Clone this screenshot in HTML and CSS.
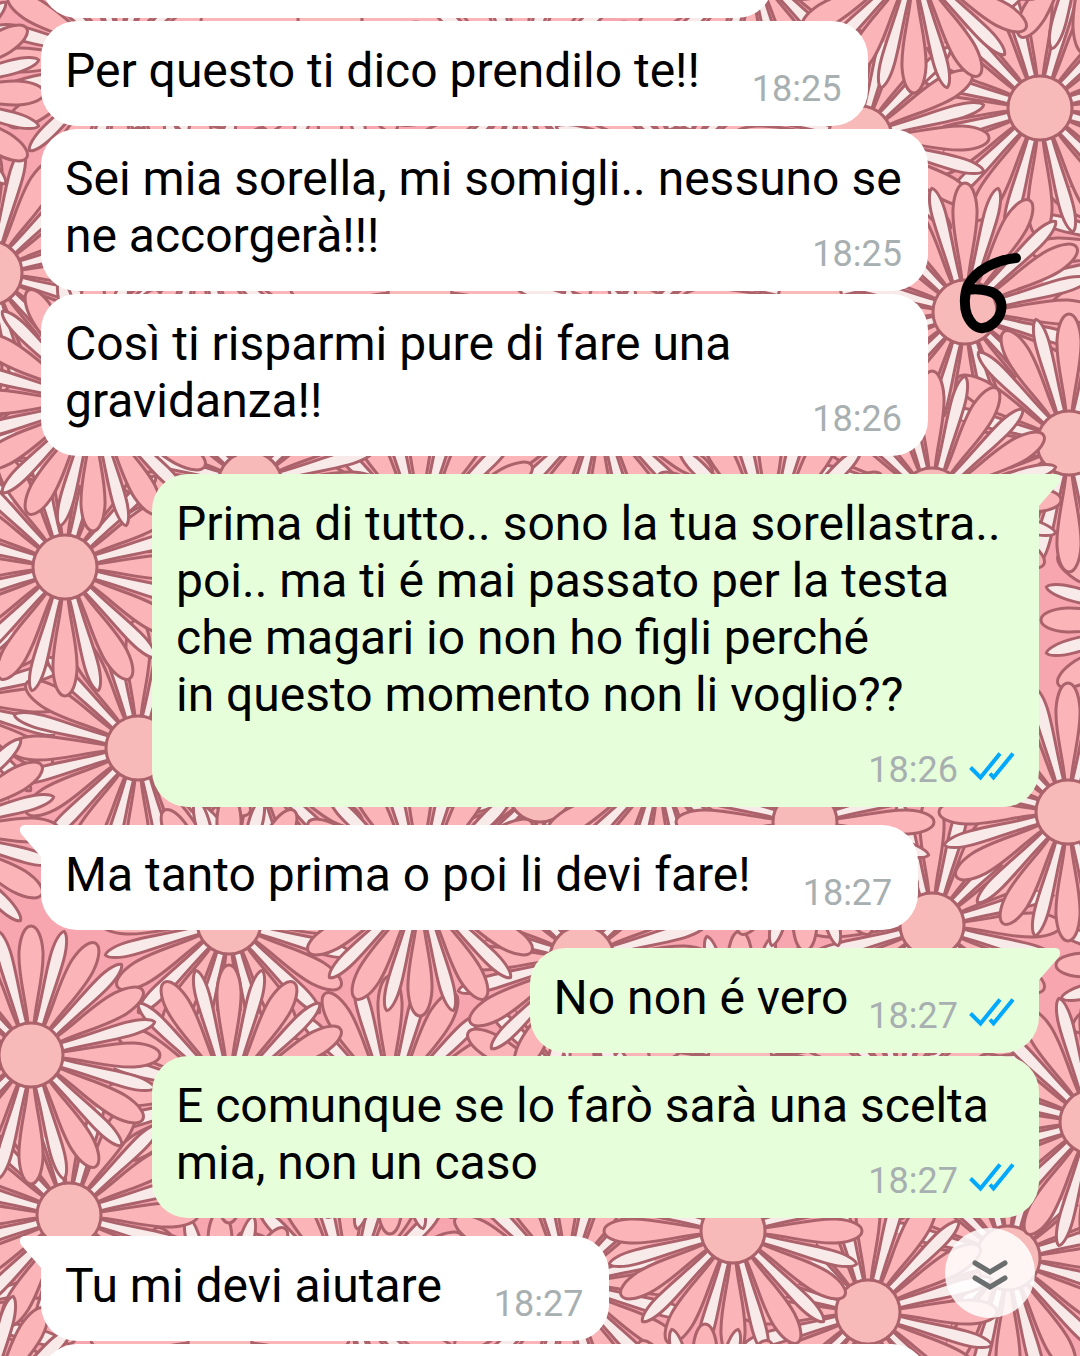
FILE: index.html
```html
<!DOCTYPE html>
<html lang="it">
<head>
<meta charset="utf-8">
<meta name="viewport" content="width=device-width, initial-scale=1">
<title>Chat</title>
<link rel="stylesheet" href="styles.css">
</head>
<body>
<svg class="wallpaper" viewBox="0 0 1080 1356" preserveAspectRatio="xMidYMin slice" aria-hidden="true">
  <defs>
    <path id="p" class="petal" d="M-3 -31C-5 -55 -13 -80 -12 -103C-11 -119 -6 -129 0 -129C6 -129 11 -119 12 -103C13 -80 5 -55 3 -31Z"/>
    <path id="w" class="petal-light" d="M-4 -31C-4 -55 -7 -80 -7 -100C-7 -115 -4 -126 0 -128C4 -126 7 -115 7 -100C7 -80 4 -55 4 -31Z"/>
    <g id="daisy">
      <circle class="bed" r="84"/>
      <use href="#w" transform="rotate(15)"/><use href="#w" transform="rotate(45)"/><use href="#w" transform="rotate(75)"/>
      <use href="#w" transform="rotate(105)"/><use href="#w" transform="rotate(135)"/><use href="#w" transform="rotate(165)"/>
      <use href="#w" transform="rotate(195)"/><use href="#w" transform="rotate(225)"/><use href="#w" transform="rotate(255)"/>
      <use href="#w" transform="rotate(285)"/><use href="#w" transform="rotate(315)"/><use href="#w" transform="rotate(345)"/>
      <use href="#p"/><use href="#p" transform="rotate(30)"/><use href="#p" transform="rotate(60)"/>
      <use href="#p" transform="rotate(90)"/><use href="#p" transform="rotate(120)"/><use href="#p" transform="rotate(150)"/>
      <use href="#p" transform="rotate(180)"/><use href="#p" transform="rotate(210)"/><use href="#p" transform="rotate(240)"/>
      <use href="#p" transform="rotate(270)"/><use href="#p" transform="rotate(300)"/><use href="#p" transform="rotate(330)"/>
      <circle class="heart" r="32"/>
    </g>
  </defs>
  <rect class="ground" width="1080" height="1356"/>
  <use href="#daisy" x="120" y="60"/>
  <use href="#daisy" x="330" y="20"/>
  <use href="#daisy" x="520" y="90"/>
  <use href="#daisy" x="680" y="160"/>
  <use href="#daisy" x="200" y="240"/>
  <use href="#daisy" x="420" y="290"/>
  <use href="#daisy" x="640" y="320"/>
  <use href="#daisy" x="810" y="300"/>
  <use href="#daisy" x="1160" y="250"/>
  <use href="#daisy" x="1170" y="620"/>
  <use href="#daisy" x="-60" y="700"/>
  <use href="#daisy" x="-40" y="450"/>
  <use href="#daisy" x="-110" y="1180"/>
  <use href="#daisy" x="-60" y="1310"/>
  <use href="#daisy" x="250" y="760"/>
  <use href="#daisy" x="540" y="790"/>
  <use href="#daisy" x="740" y="1060"/>
  <use href="#daisy" x="900" y="1090"/>
  <use href="#daisy" x="350" y="1300"/>
  <use href="#daisy" x="220" y="1340"/>
  <use href="#daisy" x="1040" y="108"/>
  <use href="#daisy" x="860" y="138"/>
  <use href="#daisy" x="751" y="-36"/>
  <use href="#daisy" x="1085" y="-75"/>
  <use href="#daisy" x="914" y="-36"/>
  <use href="#daisy" x="965" y="312"/>
  <use href="#daisy" x="1069" y="443"/>
  <use href="#daisy" x="932" y="500"/>
  <use href="#daisy" x="-10" y="273"/>
  <use href="#daisy" x="-85" y="93"/>
  <use href="#daisy" x="600" y="410"/>
  <use href="#daisy" x="770" y="540"/>
  <use href="#daisy" x="420" y="530"/>
  <use href="#daisy" x="250" y="484"/>
  <use href="#daisy" x="138" y="748"/>
  <use href="#daisy" x="65" y="567"/>
  <use href="#daisy" x="93" y="402"/>
  <use href="#daisy" x="-70" y="830"/>
  <use href="#daisy" x="229" y="922"/>
  <use href="#daisy" x="390" y="1105"/>
  <use href="#daisy" x="580" y="1097"/>
  <use href="#daisy" x="582" y="958"/>
  <use href="#daisy" x="659" y="770"/>
  <use href="#daisy" x="420" y="887"/>
  <use href="#daisy" x="229" y="1094"/>
  <use href="#daisy" x="932" y="925"/>
  <use href="#daisy" x="805" y="822"/>
  <use href="#daisy" x="1185" y="965"/>
  <use href="#daisy" x="1068" y="812"/>
  <use href="#daisy" x="1008" y="1258"/>
  <use href="#daisy" x="1092" y="1122"/>
  <use href="#daisy" x="69" y="1215"/>
  <use href="#daisy" x="31" y="1055"/>
  <use href="#daisy" x="-20" y="1420"/>
  <use href="#daisy" x="868" y="1312"/>
  <use href="#daisy" x="567" y="1283"/>
  <use href="#daisy" x="733" y="1231"/>
  <use href="#daisy" x="705" y="1453"/>
</svg>

<svg class="symbols" aria-hidden="true">
  <symbol id="read" viewBox="0 0 46 30">
    <path d="M1.500 16.500L11.500 26.500L31 2.500M21 22.500L24.500 26.500L44 2.500"/>
  </symbol>
</svg>

<main class="chat">
  <div class="bubble in stub-top"></div>
  <article class="bubble in">Per questo ti dico prendilo te!!<span class="meta"><time>18:25</time></span></article>
  <article class="bubble in">Sei mia sorella, mi somigli.. nessuno se ne accorgerà!!!<span class="meta"><time>18:25</time></span></article>
  <article class="bubble in">Così ti risparmi pure di fare una gravidanza!!<span class="meta"><time>18:26</time></span></article>
  <article class="bubble out first">Prima di tutto.. sono la tua sorellastra.. poi.. ma ti é mai passato per la testa che magari io non ho figli perché<br>in questo momento non li voglio??<span class="meta"><time>18:26</time><svg class="read" role="img" aria-label="Letto"><use href="#read"/></svg></span></article>
  <article class="bubble in first">Ma tanto prima o poi li devi fare!<span class="meta"><time>18:27</time></span></article>
  <article class="bubble out first">No non é vero<span class="meta"><time>18:27</time><svg class="read" role="img" aria-label="Letto"><use href="#read"/></svg></span></article>
  <article class="bubble out">E comunque se lo farò sarà una scelta mia, non un caso<span class="meta"><time>18:27</time><svg class="read" role="img" aria-label="Letto"><use href="#read"/></svg></span></article>
  <article class="bubble in first">Tu mi devi aiutare<span class="meta"><time>18:27</time></span></article>
  <div class="bubble in stub-bottom"></div>
</main>

<svg class="scribble" viewBox="0 0 64 84" role="img" aria-label="6">
  <path d="M58 7C38 9 18 19 10 34C6 43 6 56 9 64C13 73 19 78 25 77C33 76 41 69 43 60C45 50 40 42 30 40C23 38 15 38 9 39"/>
</svg>

<button class="jump" type="button" aria-label="Vai in fondo">
  <svg viewBox="0 0 38 34" aria-hidden="true"><path d="M4 5L19 14L34 5M4 20L19 29L34 20"/></svg>
</button>
</body>
</html>
```
FILE: styles.css
```css
* {
  box-sizing: border-box;
}

body {
  position: relative;
  height: 100vh;
  margin: 0;
  overflow: hidden;
  background: #f9aab2;
  color: #000;
  font-family: Roboto, "Noto Sans", sans-serif;
  font-size: 48px;
  line-height: 57px;
}

/* wallpaper */
.wallpaper {
  position: absolute;
  inset: 0;
  z-index: -1;
  width: 100%;
  height: 100%;
}

.ground,
.bed {
  fill: #f7a6b0;
}

.petal,
.petal-light,
.heart {
  stroke: #ab626b;
  stroke-width: 3;
}

.petal {
  fill: #fbb5b8;
}

.petal-light {
  fill: #f9eaea;
}

.heart {
  fill: #f8bab8;
}

.symbols {
  display: none;
}

/* messages */
.chat {
  display: flex;
  flex-direction: column;
  gap: 3px;
  height: 100%;
  padding: 0 41px;
  overflow: hidden;
}

.bubble {
  position: relative;
  display: flow-root;
  flex: none;
  max-width: calc(100% - 111px);
  padding: 21px 24px 27px;
  border-radius: 36px;
}

.in {
  align-self: flex-start;
  background: #fff;
}

.out {
  align-self: flex-end;
  background: #e6ffda;
}

.first {
  margin-top: 15px;
}

.in.first {
  border-top-left-radius: 0;
}

.out.first {
  border-top-right-radius: 0;
}

/* the corner that points at the speaker */
.first::before {
  content: "";
  position: absolute;
  top: 0;
  width: 22px;
  height: 33px;
  background: inherit;
}

.in.first::before {
  left: -21px;
  clip-path: path("M22 0H5C0 0 -2 5 2 10L22 33Z");
}

.out.first::before {
  right: -21px;
  clip-path: path("M0 0H17C22 0 24 5 20 10L0 33Z");
}

.meta {
  display: flex;
  float: right;
  gap: 11px;
  height: 57px;
  margin-left: 52px;
  padding: 34px 2px 0 0;
  color: #a8afb1;
  font-size: 36px;
  line-height: 27px;
}

.out .meta {
  margin-left: 20px;
  padding-right: 0;
}

.read {
  width: 46px;
  height: 30px;
  margin-top: -6px;
  fill: none;
  stroke: #00a8ff;
  stroke-width: 4;
}

/* neighbours that run past the edges of the window */
.stub-top,
.stub-bottom {
  min-height: 105px;
}

.stub-top {
  width: 732px;
  margin-top: -87px;
}

.stub-bottom {
  width: 887px;
}

.scribble {
  position: absolute;
  top: 251px;
  right: 58px;
  width: 64px;
  height: 84px;
  fill: none;
  stroke: #000;
  stroke-width: 10;
  stroke-linecap: round;
  stroke-linejoin: round;
}

.jump {
  position: absolute;
  right: 45px;
  bottom: 38px;
  display: grid;
  place-items: center;
  width: 90px;
  height: 90px;
  padding: 4px 0 0;
  border: 0;
  border-radius: 50%;
  background: rgb(255 255 255 / 86%);
}

.jump svg {
  width: 38px;
  height: 34px;
  fill: none;
  stroke: #6a6e6e;
  stroke-width: 5;
  stroke-linecap: round;
}
```
